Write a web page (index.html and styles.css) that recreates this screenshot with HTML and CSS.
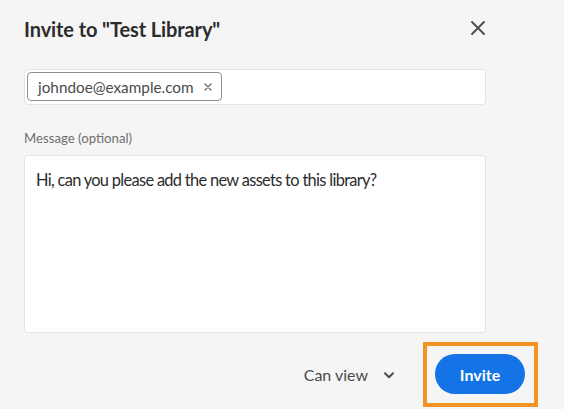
FILE: index.html
```html
<!DOCTYPE html>
<html>
<head>
<meta charset="utf-8">
<link rel="stylesheet" href="styles.css">
</head>
<body>
<div class="dialog">
  <header class="head">
    <h1 class="title">Invite to "Test Library"</h1>
    <button class="close" aria-label="Close">
      <svg width="14" height="14" viewBox="0 0 14 14"><path d="M1 1L13 13M13 1L1 13" stroke="#4b4b4b" stroke-width="1.8" stroke-linecap="round" fill="none"/></svg>
    </button>
  </header>
  <div class="field">
    <span class="tag"><span class="tag-text">johndoe@example.com</span><svg class="tag-x" width="8" height="8" viewBox="0 0 8 8"><path d="M1 1L7 7M7 1L1 7" stroke="#707070" stroke-width="1.4" stroke-linecap="round" fill="none"/></svg></span>
  </div>
  <label class="label">Message (optional)</label>
  <div class="textarea">Hi, can you please add the new assets to this library?</div>
  <footer class="foot">
    <div class="select">
      <span>Can view</span>
      <svg width="10" height="7" viewBox="0 0 10 7"><path d="M1 1.2L5 5.2L9 1.2" stroke="#4b4b4b" stroke-width="2" stroke-linecap="round" stroke-linejoin="round" fill="none"/></svg>
    </div>
    <div class="focus">
      <button class="invite">Invite</button>
    </div>
  </footer>
</div>
</body>
</html>
```
FILE: styles.css
```css
html, body {
  margin: 0;
  padding: 0;
  background: #f5f5f5;
}
body {
  font-family: Lato, "Open Sans", sans-serif;
  color: #2c2c2c;
}
.dialog {
  padding: 16px 0 0 24px;
}
.head {
  width: 462px;
  height: 26px;
  display: flex;
  align-items: center;
  justify-content: space-between;
}
.title {
  margin: 0;
  font-size: 20px;
  line-height: 26px;
  font-weight: 700;
  color: #2c2c2c;
  letter-spacing: -0.1px;
}
.close {
  border: 0;
  background: none;
  padding: 0;
  width: 14px;
  height: 14px;
  margin-right: 1px;
  margin-top: -2px;
  display: flex;
}
.field {
  margin-top: 27px;
  width: 462px;
  height: 36px;
  box-sizing: border-box;
  background: #fff;
  border: 1px solid #e4e4e4;
  border-radius: 4px;
  padding: 2px;
  display: flex;
  align-items: flex-start;
}
.tag {
  height: 29px;
  box-sizing: border-box;
  border: 1px solid #8e8e8e;
  border-radius: 4px;
  padding: 0 9px 0 10px;
  display: flex;
  align-items: center;
  gap: 10px;
  font-size: 15.3px;
  color: #4b4b4b;
}
.tag-x {
  display: block;
}
.label {
  display: block;
  margin-top: 23px;
  font-size: 13.2px;
  line-height: 20px;
  color: #6e6e6e;
}
.textarea {
  margin-top: 7px;
  width: 462px;
  height: 178px;
  box-sizing: border-box;
  background: #fff;
  border: 1px solid #e4e4e4;
  border-radius: 4px;
  padding: 12px 11px;
  font-size: 16.4px;
  line-height: 24px;
  letter-spacing: -0.68px;
  color: #2c2c2c;
}
.foot {
  margin-top: 9px;
  width: 514px;
  display: flex;
  justify-content: flex-end;
  align-items: center;
}
.select {
  display: flex;
  align-items: center;
  gap: 16px;
  font-size: 16px;
  color: #4b4b4b;
}
.select svg {
  display: block;
  margin-top: 1px;
}
.focus {
  margin-left: 29px;
  border: 4px solid #f29423;
  padding: 8px 9px 9px 8px;
}
.invite {
  display: block;
  width: 90px;
  height: 40px;
  border: 0;
  border-radius: 20px;
  background: #1473e6;
  color: #fff;
  font-family: Lato, "Open Sans", sans-serif;
  font-size: 16px;
  font-weight: 700;
  padding: 0;
}
```
